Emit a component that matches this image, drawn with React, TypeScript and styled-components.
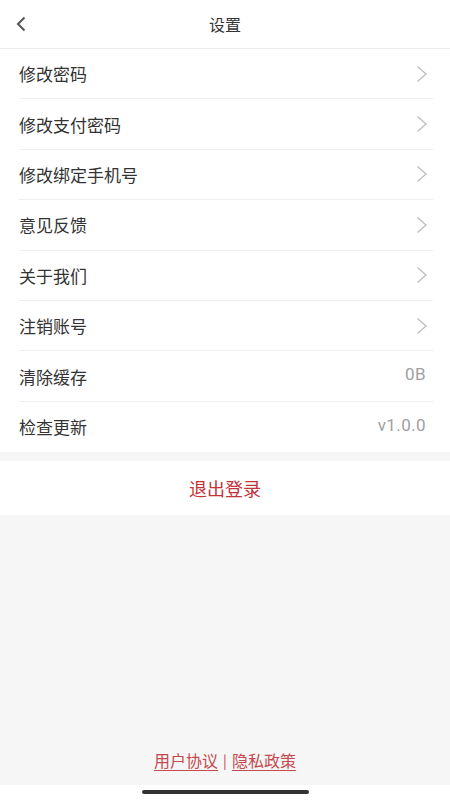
import styled, { createGlobalStyle } from 'styled-components';

const GlobalStyle = createGlobalStyle`
  html, body {
    margin: 0;
    padding: 0;
    background: #f6f6f6;
  }
  body {
    font-family: 'Noto Sans CJK SC', 'Noto Sans', sans-serif;
    -webkit-font-smoothing: antialiased;
  }
`;

const Page = styled.div`
  width: 450px;
  height: 800px;
  display: flex;
  flex-direction: column;
  background: #f6f6f6;
  overflow: hidden;
`;

const Header = styled.div`
  height: 48px;
  flex-shrink: 0;
  background: #fff;
  border-bottom: 1px solid #ececec;
  display: grid;
  grid-template-columns: 60px 1fr 60px;
  align-items: center;
`;

const BackButton = styled.div`
  display: flex;
  align-items: center;
  padding-left: 15px;
  height: 100%;
`;

const Title = styled.div`
  text-align: center;
  font-size: 16px;
  color: #333;
`;

const List = styled.div`
  background: #fff;
  padding: 0 17px 0 19px;
`;

const Row = styled.div<{ $last?: boolean }>`
  height: 50.4px;
  box-sizing: border-box;
  display: flex;
  align-items: center;
  justify-content: space-between;
  border-bottom: ${(p) => (p.$last ? 'none' : '1px solid #eeeeee')};
`;

const Label = styled.span`
  font-size: 17px;
  color: #333;
`;

const Value = styled.span`
  font-family: 'Roboto', 'Noto Sans', sans-serif;
  font-size: 17px;
  color: #a0a0a0;
  padding-right: 7px;
  letter-spacing: 0.4px;
  margin-top: -4px;
`;

const Chevron = styled.svg`
  width: 12px;
  height: 18px;
  margin-right: 5px;
`;

const LogoutBar = styled.div`
  margin-top: 9px;
  height: 54px;
  flex-shrink: 0;
  background: #fff;
  display: flex;
  align-items: center;
  justify-content: center;
  font-size: 18px;
  color: #c2333a;
`;

const Spacer = styled.div`
  flex: 1;
`;

const Footer = styled.div`
  display: flex;
  justify-content: center;
  align-items: center;
  gap: 5px;
  padding-bottom: 13px;
  font-size: 16px;
  color: #c44a4f;
`;

const FooterLink = styled.span`
  text-decoration: underline;
  text-underline-offset: 3px;
`;

const Separator = styled.span`
  color: #b44;
  font-size: 14px;
`;

const HomeArea = styled.div`
  height: 15px;
  flex-shrink: 0;
  background: #fff;
  display: flex;
  justify-content: center;
  padding-top: 5px;
  box-sizing: border-box;
`;

const HomeIndicator = styled.div`
  width: 167px;
  height: 4px;
  border-radius: 2px;
  background: #333;
`;

const ArrowRight = () => (
  <Chevron viewBox="0 0 12 18" fill="none">
    <path d="M1.5 1.5 L10 9 L1.5 16.5" stroke="#bdbdbd" strokeWidth="1.3" />
  </Chevron>
);

const items: { label: string; value?: string }[] = [
  { label: '修改密码' },
  { label: '修改支付密码' },
  { label: '修改绑定手机号' },
  { label: '意见反馈' },
  { label: '关于我们' },
  { label: '注销账号' },
  { label: '清除缓存', value: '0B' },
  { label: '检查更新', value: 'v1.0.0' },
];

export default function App() {
  return (
    <>
      <GlobalStyle />
      <Page>
        <Header>
          <BackButton>
            <svg width="12" height="16" viewBox="0 0 12 16" fill="none">
              <path d="M9.5 1.5 L3 8 L9.5 14.5" stroke="#555" strokeWidth="2" />
            </svg>
          </BackButton>
          <Title>设置</Title>
          <div />
        </Header>
        <List>
          {items.map((item, i) => (
            <Row key={item.label} $last={i === items.length - 1}>
              <Label>{item.label}</Label>
              {item.value ? <Value>{item.value}</Value> : <ArrowRight />}
            </Row>
          ))}
        </List>
        <LogoutBar>退出登录</LogoutBar>
        <Spacer />
        <Footer>
          <FooterLink>用户协议</FooterLink>
          <Separator>|</Separator>
          <FooterLink>隐私政策</FooterLink>
        </Footer>
        <HomeArea>
          <HomeIndicator />
        </HomeArea>
      </Page>
    </>
  );
}
